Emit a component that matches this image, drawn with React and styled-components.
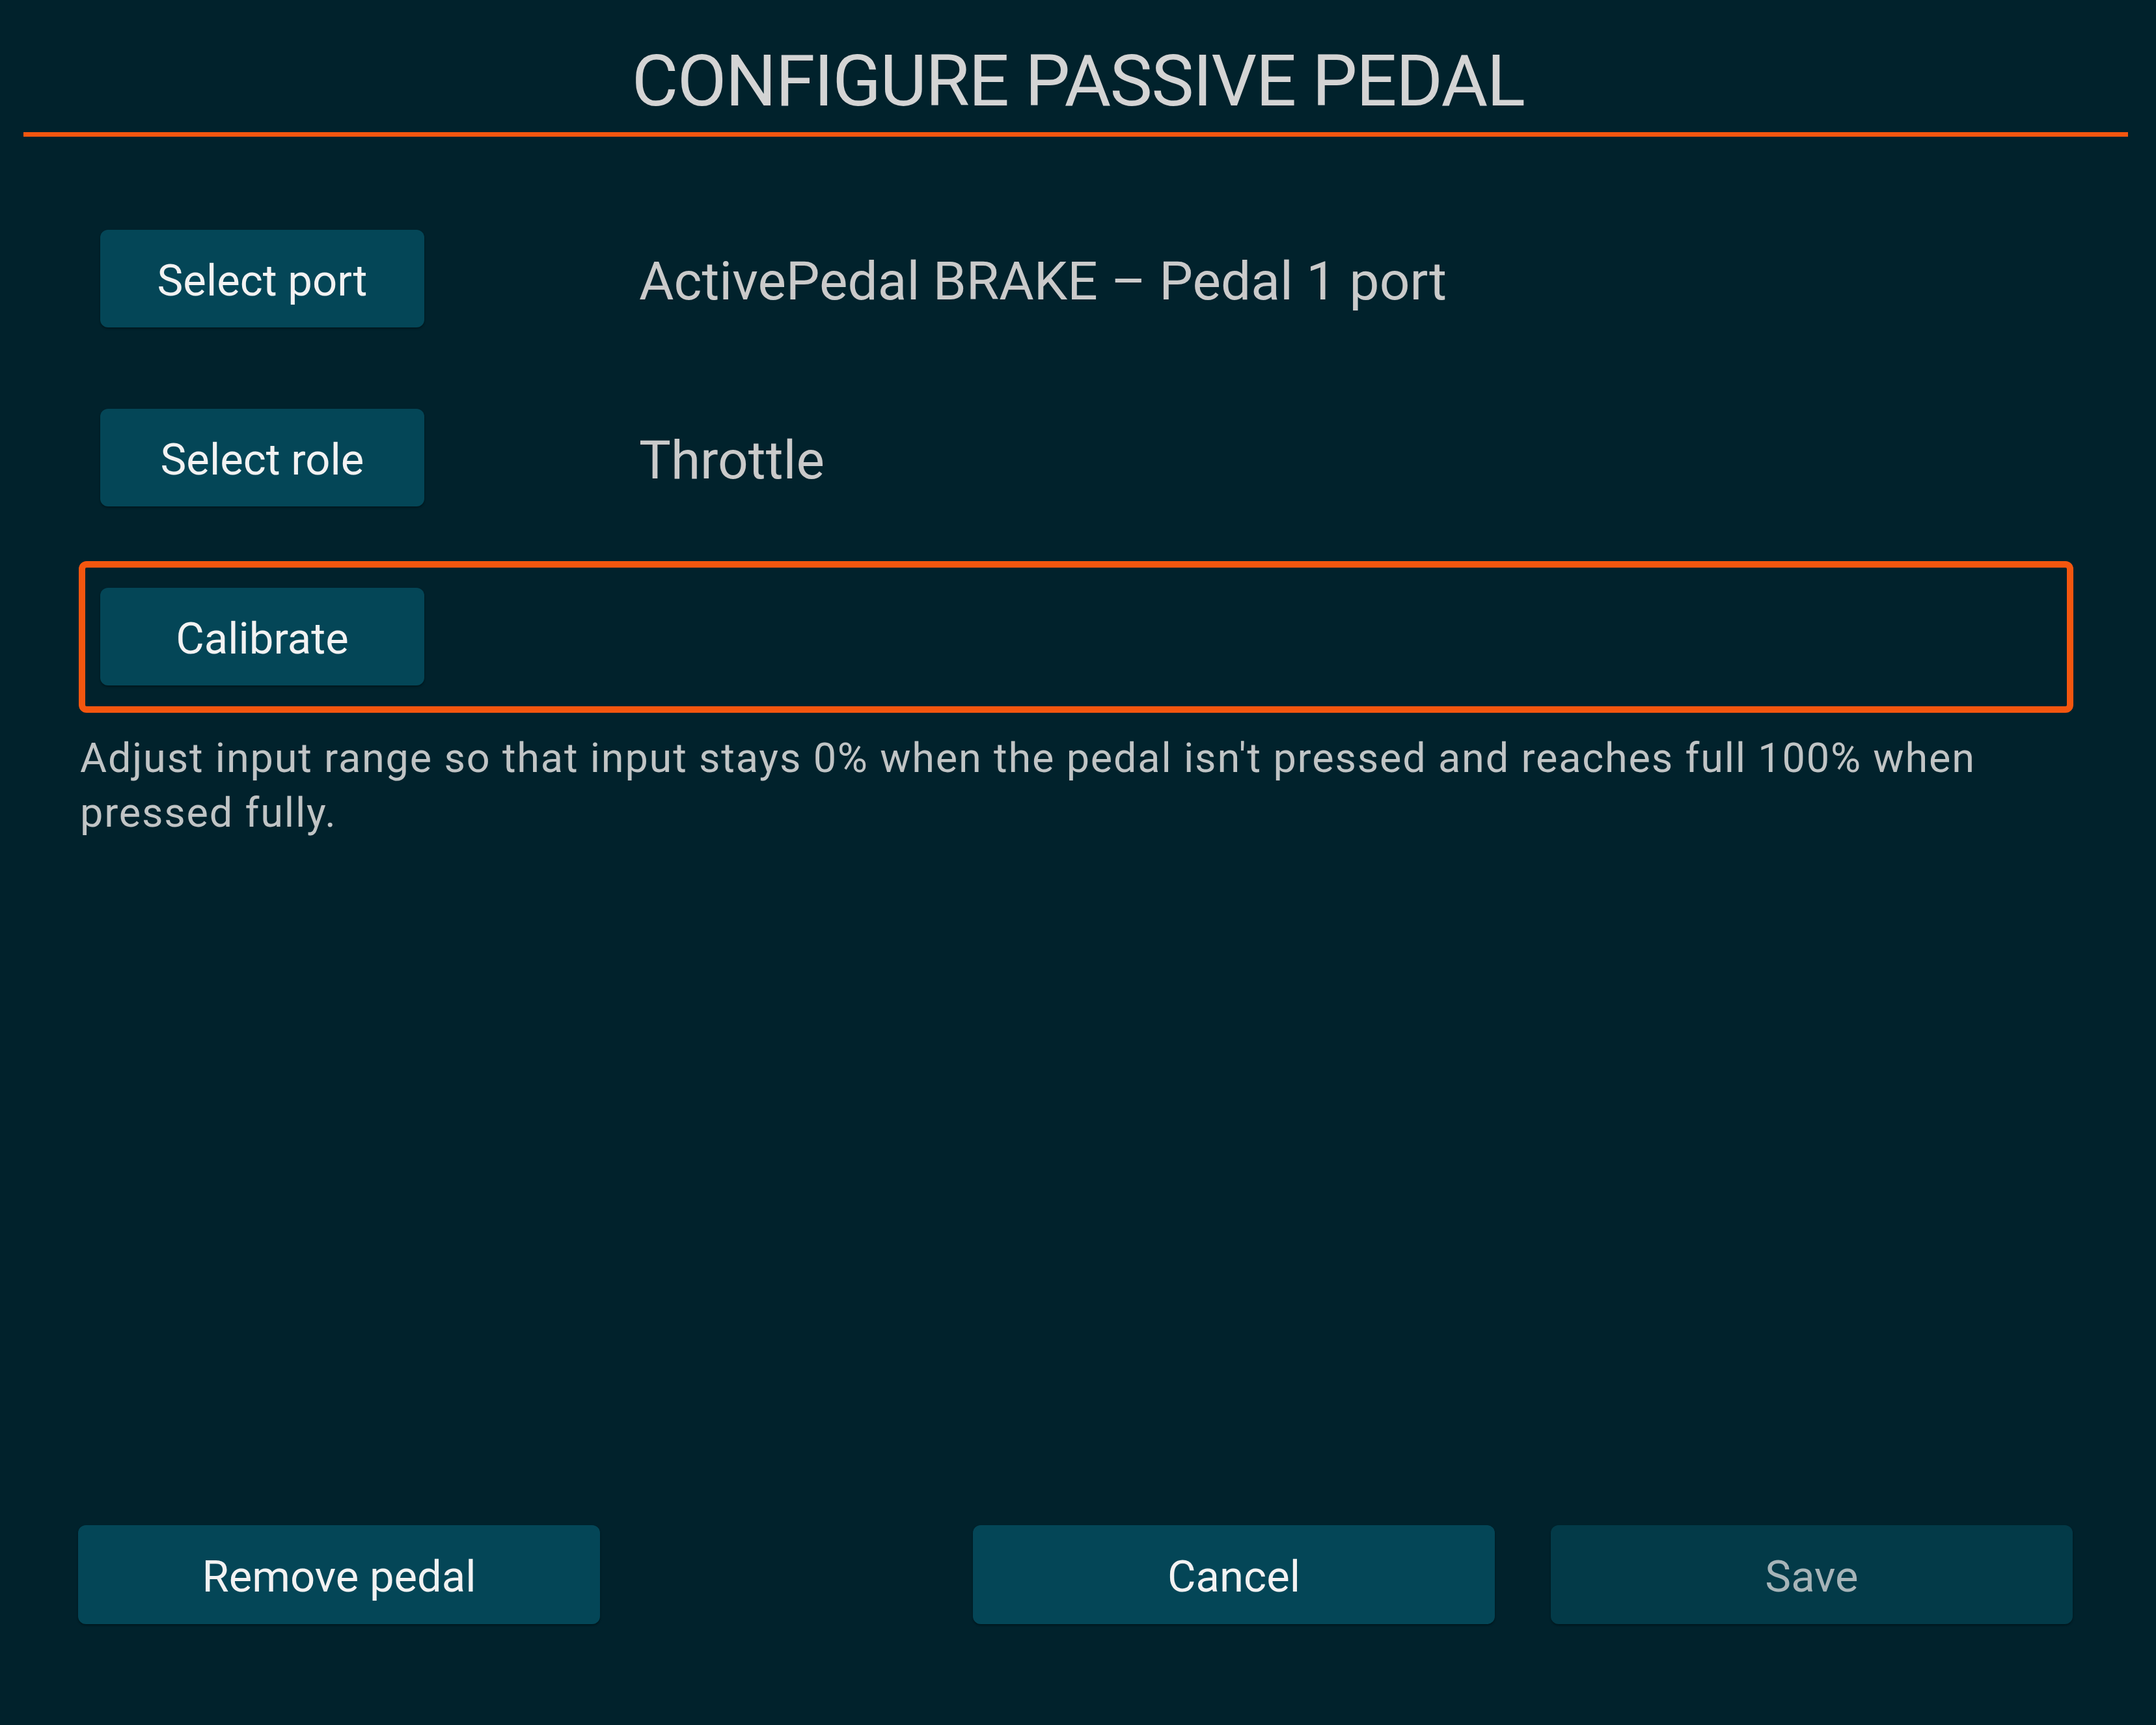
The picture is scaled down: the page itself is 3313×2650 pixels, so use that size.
import React from 'react';
import styled, { createGlobalStyle } from 'styled-components';

const GlobalStyle = createGlobalStyle`
  html, body {
    margin: 0;
    padding: 0;
    background: #01222c;
  }
  body {
    font-family: Roboto, "Liberation Sans", sans-serif;
  }
`;

const rows = [
  { id: 'port', label: 'Select port', value: 'ActivePedal BRAKE – Pedal 1 port' },
  { id: 'role', label: 'Select role', value: 'Throttle' },
  { id: 'calibrate', label: 'Calibrate', value: '', active: true },
];

const App = () => {
  return (
    <>
      <GlobalStyle />
      <Page>
        <Header>
          <Title>CONFIGURE PASSIVE PEDAL</Title>
          <Divider />
        </Header>

        <Content>
          <Rows>
            {rows.map(row => (
              <Row key={row.id} active={row.active}>
                <RowButton>{row.label}</RowButton>
                {row.value && <RowValue>{row.value}</RowValue>}
              </Row>
            ))}
          </Rows>
          <Hint>
            Adjust input range so that input stays 0% when the pedal isn't
            pressed and reaches full 100% when pressed fully.
          </Hint>
        </Content>

        <Footer>
          <FooterButton>Remove pedal</FooterButton>
          <FooterGroup>
            <FooterButton>Cancel</FooterButton>
            <FooterButton disabled>Save</FooterButton>
          </FooterGroup>
        </Footer>
      </Page>
    </>
  );
};

export default App;

const Page = styled.div`
  min-height: 100vh;
  display: flex;
  flex-direction: column;
  box-sizing: border-box;
  padding-bottom: 155px;
`;

const Header = styled.header`
  padding-top: 70px;
`;

const Title = styled.h1`
  margin: 0;
  text-align: center;
  font-size: 110px;
  line-height: 110px;
  font-weight: 400;
  letter-spacing: -1.6px;
  color: #d4d4d4;
`;

const Divider = styled.div`
  height: 7px;
  margin: 23px 43px 0 36px;
  background: #f4560f;
`;

const Content = styled.main`
  padding: 102px 127px 0 121px;
`;

const Rows = styled.div`
  display: flex;
  flex-direction: column;
  gap: 42px;
`;

const Row = styled.div`
  display: flex;
  align-items: center;
  padding: 31px 23px 32px;
  border: 10px solid ${p => (p.active ? '#f4560f' : 'transparent')};
  border-radius: 12px;
`;

const Button = styled.button`
  display: flex;
  align-items: center;
  justify-content: center;
  box-sizing: border-box;
  height: 150px;
  padding: 6px 0 0;
  border: none;
  border-radius: 12px;
  background: #044657;
  color: #f2f2f2;
  font-family: inherit;
  font-size: 67px;
  font-weight: 400;
  box-shadow: 0 2px 3px rgba(0, 0, 0, 0.35);
  cursor: pointer;
`;

const RowButton = styled(Button)`
  width: 498px;
  flex-shrink: 0;
`;

const RowValue = styled.div`
  margin-left: 330px;
  padding-top: 8px;
  font-size: 82px;
  color: #cacaca;
  white-space: nowrap;
`;

const Hint = styled.p`
  margin: 28px 0 0 2px;
  font-size: 63px;
  line-height: 84px;
  letter-spacing: 1.8px;
  color: #c0c4c5;
`;

const Footer = styled.footer`
  margin-top: auto;
  display: flex;
  justify-content: space-between;
  padding: 0 128px 0 120px;
`;

const FooterGroup = styled.div`
  display: flex;
  gap: 86px;
`;

const FooterButton = styled(Button)`
  width: 802px;
  height: 152px;
  background: ${p => (p.disabled ? '#033a48' : '#044657')};
  color: ${p => (p.disabled ? '#a6b4b8' : '#f2f2f2')};
  cursor: ${p => (p.disabled ? 'default' : 'pointer')};
`;
